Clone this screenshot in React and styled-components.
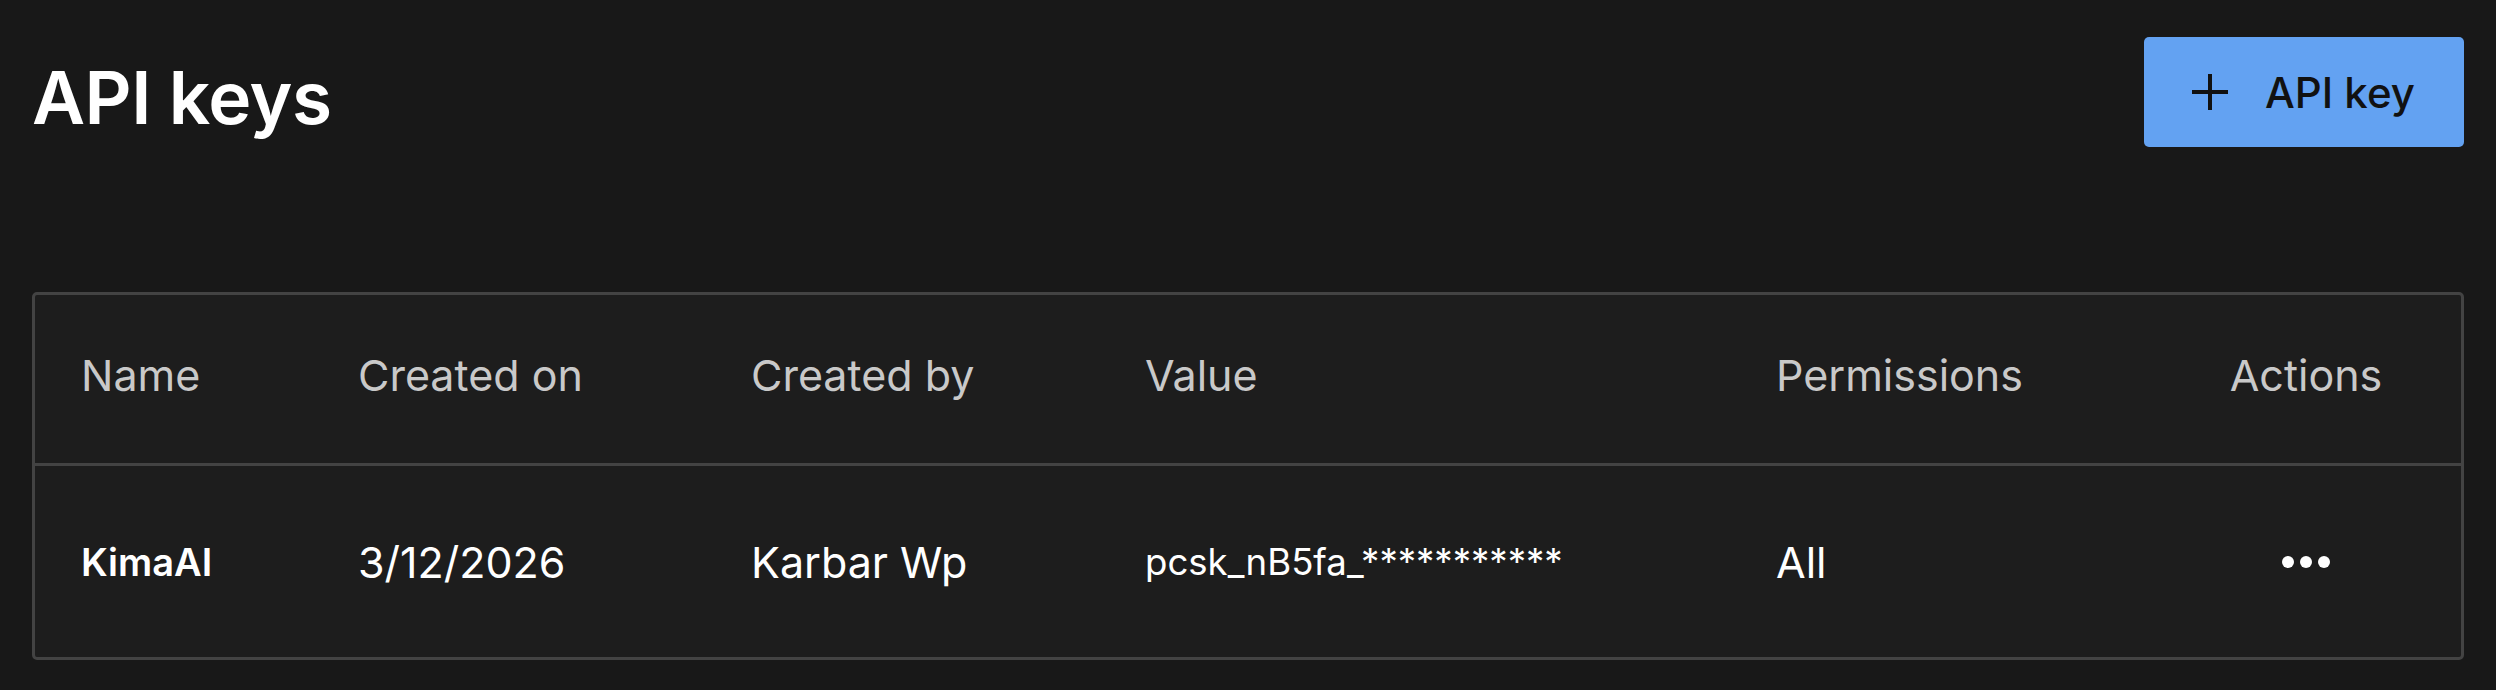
import React from "react"
import styled, { createGlobalStyle } from "styled-components"

const GlobalStyle = createGlobalStyle`
  html, body {
    margin: 0;
    padding: 0;
    background: #181818;
  }
  body {
    font-family: Inter, "Noto Sans", sans-serif;
    color: #fff;
  }
`

const Page = styled.div`
  padding: 37px 32px 0 32px;
`

const TopBar = styled.div`
  display: flex;
  justify-content: space-between;
  align-items: center;
  height: 110px;
`

const Title = styled.h1`
  margin: 10px 0 0 0;
  font-size: 73px;
  line-height: 1;
  font-weight: 600;
  letter-spacing: -0.5px;
  color: #fff;
`

const AddButton = styled.button`
  display: flex;
  align-items: center;
  gap: 37px;
  height: 110px;
  width: 320px;
  padding: 0 0 0 48px;
  border: none;
  border-radius: 5px;
  background: #63a2f2;
  color: #111;
  font-family: inherit;
  font-size: 42px;
  font-weight: 500;
  cursor: pointer;
`

const Table = styled.div`
  margin-top: 145px;
  border: 3px solid #434343;
  border-radius: 5px;
  background: #1d1d1d;
  display: grid;
  grid-template-columns: 277px 393px 394px 631px 421px 1fr;
`

const Row = styled.div`
  display: contents;
`

const Cell = styled.div`
  display: flex;
  align-items: center;
  justify-content: ${(p) => (p.$center ? "center" : "flex-start")};
  padding-left: ${(p) => (p.$center ? "0" : "46px")};
  padding-bottom: ${(p) => (p.$head ? "8px" : "0")};
  box-sizing: border-box;
  height: ${(p) => (p.$head ? "171px" : "191px")};
  border-bottom: ${(p) => (p.$head ? "3px solid #434343" : "none")};
  font-size: ${(p) => p.$size || 43}px;
  font-weight: ${(p) => p.$weight || 400};
  color: ${(p) => (p.$head ? "#c9c9c9" : "#fff")};
  white-space: nowrap;
`

function PlusIcon() {
  return (
    <svg width="36" height="36" viewBox="0 0 36 36">
      <path d="M0 18h36M18 0v36" stroke="#111" strokeWidth="4" />
    </svg>
  )
}

function DotsIcon() {
  return (
    <svg width="48" height="12" viewBox="0 0 48 12">
      <circle cx="6" cy="6" r="6" fill="#fff" />
      <circle cx="24" cy="6" r="6" fill="#fff" />
      <circle cx="42" cy="6" r="6" fill="#fff" />
    </svg>
  )
}

const columns = ["Name", "Created on", "Created by", "Value", "Permissions"]

export default function App() {
  return (
    <>
      <GlobalStyle />
      <Page>
        <TopBar>
          <Title>API keys</Title>
          <AddButton>
            <PlusIcon />
            API key
          </AddButton>
        </TopBar>

        <Table>
          <Row>
            {columns.map((c) => (
              <Cell $head key={c}>
                {c}
              </Cell>
            ))}
            <Cell $head $center>
              Actions
            </Cell>
          </Row>
          <Row>
            <Cell $size={38} $weight={600}>KimaAI</Cell>
            <Cell>3/12/2026</Cell>
            <Cell>Karbar Wp</Cell>
            <Cell $size={36.6}>pcsk_nB5fa_***********</Cell>
            <Cell>All</Cell>
            <Cell $center>
              <DotsIcon />
            </Cell>
          </Row>
        </Table>
      </Page>
    </>
  )
}
